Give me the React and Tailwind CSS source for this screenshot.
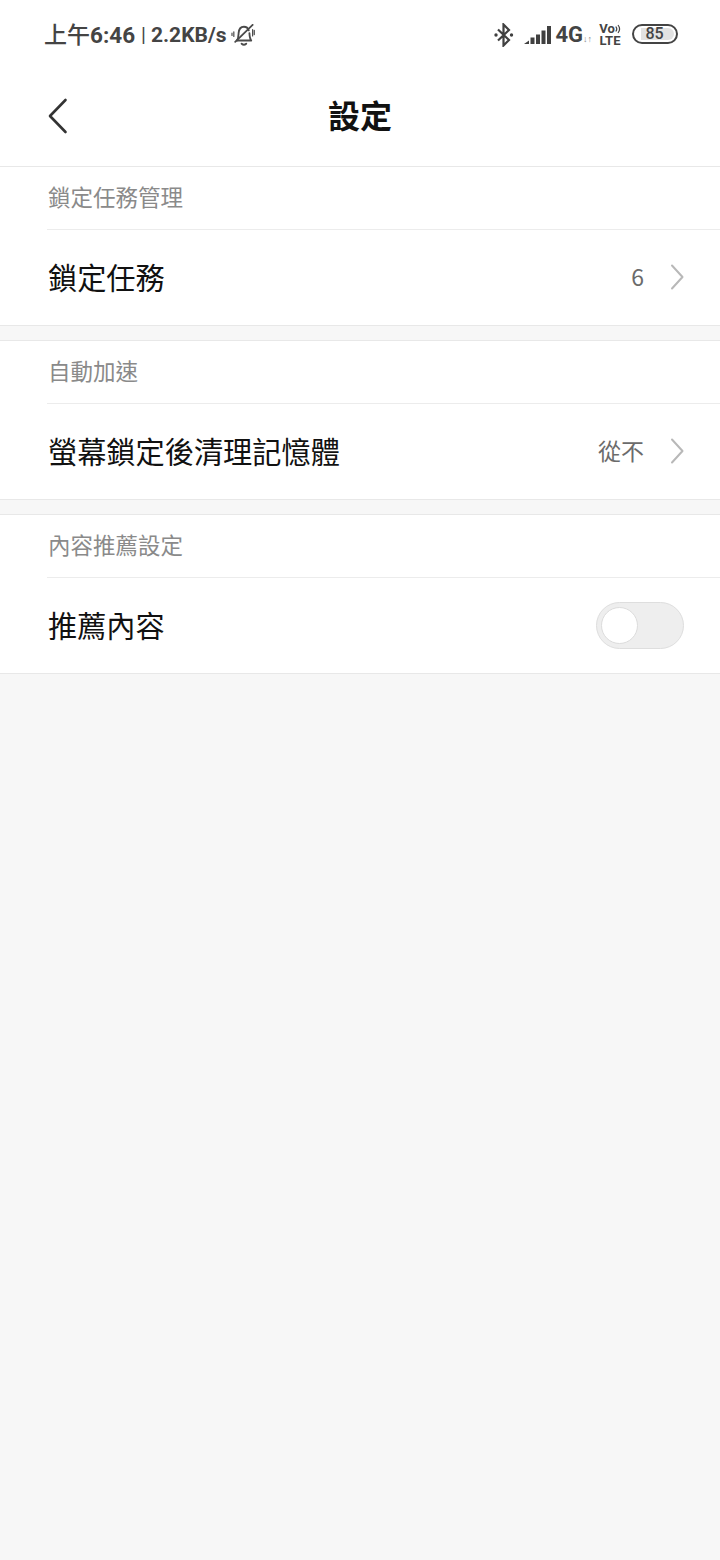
const cjk = 'font-["Noto_Sans_CJK_TC","Noto_Sans_CJK_SC",sans-serif]';

function Chevron() {
  return (
    <svg width="14" height="26" viewBox="0 0 14 26" fill="none" className="ml-[26px]">
      <path d="M2 1.500 L12.500 13 L2 24.500" stroke="#b8b8b8" strokeWidth="2" strokeLinecap="round" strokeLinejoin="round" />
    </svg>
  );
}

function BackArrow() {
  return (
    <svg width="20" height="36" viewBox="0 0 20 36" fill="none" className="absolute left-[48px] top-[28px]">
      <path d="M17.500 2 L2 18 L17.500 34" stroke="#333333" strokeWidth="2.600" strokeLinecap="round" strokeLinejoin="round" />
    </svg>
  );
}

function MuteBell() {
  return (
    <svg width="24" height="22" viewBox="0 0 26 24" fill="none" stroke="#4a4a4a" strokeWidth="2" strokeLinecap="round" strokeLinejoin="round">
      <path d="M6.500 18 C8 16 8 13 8.200 10 C8.500 5.500 11 3 14 3 C16.500 3 18.500 4.500 19.300 7" />
      <path d="M20 10 C20.200 13 20.300 16 22 18 H6.500" />
      <path d="M11.500 21.500 C13 22.800 15 22.800 16.500 21.500" />
      <path d="M23.500 1 L4.500 19.500" />
      <path d="M3 8.500 V13.500 M1 10 V12.500" strokeWidth="1.300" />
      <path d="M23.500 6 V13 M25.300 7 V11.500" strokeWidth="1.300" />
    </svg>
  );
}

function Bluetooth() {
  return (
    <svg width="20" height="24" viewBox="0 0 20 24" fill="none" stroke="#404040" strokeWidth="2.200">
      <path d="M4 6.500 L15 17 L9.500 22.500 V1.500 L15 7 L4 17.500" />
      <circle cx="2" cy="12" r="1.700" fill="#404040" stroke="none" />
      <circle cx="17.500" cy="12" r="1.700" fill="#404040" stroke="none" />
    </svg>
  );
}

function Signal() {
  return (
    <svg width="28" height="20" viewBox="0 0 28 20" fill="#404040">
      <path d="M0 19 L5 15.500 V19 Z" />
      <rect x="6.500" y="12.500" width="4" height="6.500" />
      <rect x="12" y="9.500" width="4" height="9.500" />
      <rect x="17.500" y="5.500" width="4" height="13.500" />
      <rect x="23" y="1" width="4" height="18" />
    </svg>
  );
}

function VoWaves() {
  return (
    <svg width="6" height="10" viewBox="0 0 6 10" fill="none" stroke="#444444" strokeWidth="1.200">
      <path d="M0.800 2.500 C2 4 2 6 0.800 7.500" />
      <path d="M3 1 C5 3.500 5 6.500 3 9" />
    </svg>
  );
}

function StatusBar() {
  return (
    <div className='flex h-[70px] items-center justify-between pl-[44px] pr-[42px] font-["Roboto",sans-serif] text-[#444444]'>
      <div className="flex items-center">
        <span className={`${cjk} -mt-[3px] text-[23px] font-medium leading-none`}>上午</span>
        <span className="text-[22.500px] font-bold leading-none">6:46</span>
        <span className="ml-[6px] text-[20px] leading-none">|</span>
        <span className="ml-[5px] text-[21px] font-bold leading-none">2.2KB/s</span>
        <span className="ml-[4px]"><MuteBell /></span>
      </div>
      <div className="flex items-center">
        <Bluetooth />
        <span className="ml-[10px]"><Signal /></span>
        <span className="ml-[3px] text-[22px] font-bold leading-none">4G</span>
        <span className="mt-[8px] w-[10px] text-[9px] leading-none text-[#888888]">↓↑</span>
        <div className="ml-[4px] flex w-[26px] flex-col items-center text-[13px] font-bold leading-[12px]">
          <span className="flex items-center">Vo<VoWaves /></span>
          <span>LTE</span>
        </div>
        <div className="ml-[9px] -mt-[2px] flex h-[20px] w-[46px] items-center rounded-full border-2 border-[#444444] py-[2px] pl-[7px] pr-[2px]">
          <div className="flex h-full w-[33px] items-center justify-center rounded-r-full bg-[#e2e2e2] pr-[6px] text-[16px] font-medium leading-none">85</div>
        </div>
      </div>
    </div>
  );
}

function Section({ title, label, value, toggle }) {
  return (
    <section className={`border-y border-[#e8e8e8] bg-white ${cjk}`}>
      <div className="ml-[47px] flex h-[63px] items-center border-b border-[#ececec] pb-[3px] pl-px text-[22.500px] leading-none text-[#8a8a8a]">
        {title}
      </div>
      <div className="flex h-[95px] items-center justify-between pl-[48px] pr-[36px]">
        <span className="-mt-[2px] text-[29.200px] leading-none text-[#111111]">{label}</span>
        {toggle ? (
          <div className="flex h-[47px] w-[88px] items-center rounded-full border border-[#dedede] bg-[#eeeeee] pl-[4px]">
            <div className="h-[37px] w-[37px] rounded-full border border-[#dcdcdc] bg-white" />
          </div>
        ) : (
          <div className="-mt-[2px] flex items-center">
            <span className="text-[23px] leading-none text-[#6b6b6b]">{value}</span>
            <Chevron />
          </div>
        )}
      </div>
    </section>
  );
}

export default function App() {
  return (
    <div className="flex h-[1560px] flex-col bg-[#f7f7f7]">
      <div className="bg-white">
        <StatusBar />
        <div className="relative flex h-[96px] items-center justify-center pb-[8px]">
          <BackArrow />
          <h1 className={`${cjk} text-[32px] font-bold leading-none text-[#111111]`}>設定</h1>
        </div>
      </div>
      <div className="flex flex-col gap-[14px]">
        <Section title="鎖定任務管理" label="鎖定任務" value="6" />
        <Section title="自動加速" label="螢幕鎖定後清理記憶體" value="從不" />
        <Section title="內容推薦設定" label="推薦內容" toggle />
      </div>
    </div>
  );
}
